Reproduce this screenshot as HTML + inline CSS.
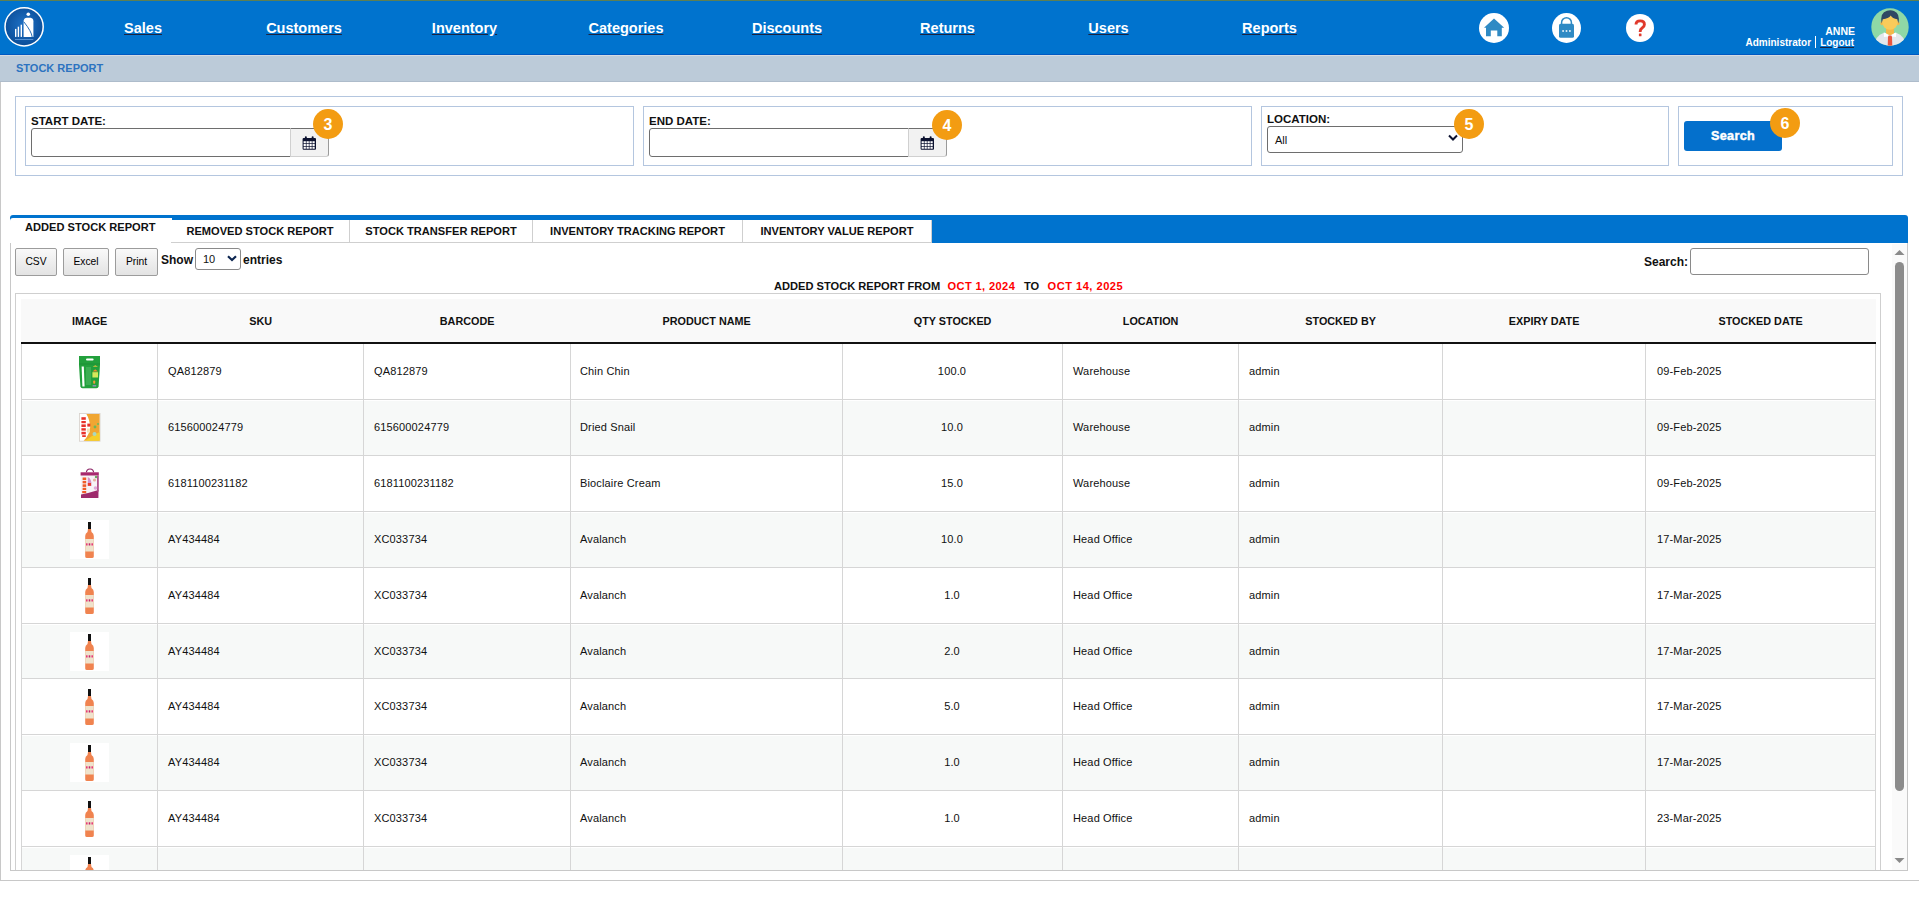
<!DOCTYPE html><html><head><meta charset="utf-8"><style>
*{box-sizing:border-box;margin:0;padding:0}
html,body{width:1919px;height:902px;overflow:hidden;background:#fff;font-family:"Liberation Sans",sans-serif;color:#111}
.a{position:absolute}
#topline{left:0;top:0;width:1919px;height:1px;background:#5d7f52}
#hdr{left:0;top:1px;width:1919px;height:54px;background:#0073ce}
.nav{position:absolute;top:20px;font-weight:bold;font-size:14.5px;line-height:16px;color:#fff;text-decoration:underline;text-decoration-color:#1c2340;text-underline-offset:1px;white-space:nowrap;transform:translateX(-50%)}
#band{left:0;top:55px;width:1919px;height:27px;background:#bccbd9}
#bandtxt{left:16px;top:62px;font-size:11px;line-height:12px;font-weight:bold;color:#2c73c0;white-space:nowrap}
#page{left:0;top:82px;width:1919px;height:799px;border-left:1px solid #c8c8c8;border-bottom:1px solid #c8c8c8}
.box{position:absolute;border:1px solid #b4c6df}
.lbl{position:absolute;font-size:11.5px;line-height:12px;font-weight:bold;color:#111;white-space:nowrap}
.inp{position:absolute;border:1px solid #6e6e6e;border-radius:3px 0 0 3px;background:#fff}
.addon{position:absolute;background:#f2f2f2;border:1px solid #d0d0d0;border-top:1px solid #6e6e6e;border-right:1px solid #9a9a9a;border-radius:0 3px 3px 0}
.badge{position:absolute;width:30px;height:30px;border-radius:50%;background:#f39c12;color:#fff;font-weight:bold;font-size:16px;text-align:center;line-height:31px}
.tab{position:absolute;top:220px;height:23px;background:#fff;border-right:1px solid #cfcfcf;border-bottom:1px solid #cfcfcf;font-size:11.1px;font-weight:bold;line-height:12px;color:#111;white-space:nowrap;padding-top:5px;text-align:center}
.btn{position:absolute;top:248px;height:28px;border:1px solid #9c9c9c;border-radius:2px;background:linear-gradient(#f9f9f9,#e3e3e3);font-size:10.3px;color:#000;text-align:center;line-height:26px}
.th{position:absolute;top:315px;font-size:10.8px;line-height:12px;font-weight:bold;color:#111;white-space:nowrap;transform:translateX(-50%)}
.td{position:absolute;font-size:11px;line-height:12px;color:#111;white-space:nowrap;letter-spacing:0.15px}
.vl{position:absolute;width:1px;background:#d6d6d6}
.hl{position:absolute;height:1px;background:#d6d6d6}
</style></head><body>
<div id="topline" class="a"></div><div id="hdr" class="a"></div>
<svg class="a" style="left:3px;top:6px" width="42" height="42" viewBox="0 0 42 42">
<defs><radialGradient id="lg" cx="50%" cy="45%" r="55%"><stop offset="0" stop-color="#1f72c6"/><stop offset="1" stop-color="#0a4d98"/></radialGradient></defs>
<circle cx="21.1" cy="20.8" r="19.1" fill="url(#lg)" stroke="#fff" stroke-width="1.5"/>
<rect x="12" y="22.9" width="1.4" height="8" fill="#fff"/><rect x="14.7" y="20.7" width="1.4" height="10.2" fill="#fff"/><rect x="17.6" y="18.7" width="1.4" height="12.2" fill="#fff"/>
<path d="M20.6 30.9 L20.6 14.8 Q21.2 11.9 23.8 11.8 L27.6 11.8 Q30.3 12.3 30.4 15.2 L30.4 30.9 Z" fill="#fff"/>
<path d="M20.8 15.8 Q25 21 26.8 24.5 Q28.8 28 29.2 31" fill="none" stroke="#0f5cad" stroke-width="0.9"/>
<circle cx="25.3" cy="8.3" r="1.8" fill="#fff"/>
<rect x="12" y="33" width="18.3" height="0.9" fill="#5d97d6"/>
</svg>
<div class="nav" style="left:143px">Sales</div>
<div class="nav" style="left:304px">Customers</div>
<div class="nav" style="left:464.5px">Inventory</div>
<div class="nav" style="left:626px">Categories</div>
<div class="nav" style="left:787px">Discounts</div>
<div class="nav" style="left:947.5px">Returns</div>
<div class="nav" style="left:1108.5px">Users</div>
<div class="nav" style="left:1269.5px">Reports</div>
<svg class="a" style="left:1479px;top:13px" width="30" height="30" viewBox="0 0 30 30">
<circle cx="15" cy="15" r="15" fill="#fff"/>
<path d="M5 14.7 L15 5.5 L25.2 14.7 L22.8 14.7 L22.8 23.3 L18.3 23.3 L18.3 17.5 L11.8 17.5 L11.8 23.3 L7 23.3 L7 14.7 Z" fill="#2f8ac4"/>
</svg>
<svg class="a" style="left:1552px;top:13px" width="30" height="30" viewBox="0 0 30 30">
<ellipse cx="14.5" cy="15" rx="14.5" ry="15" fill="#fff"/>
<path d="M9.6 11.5 V9.6 A4.9 4.9 0 0 1 19.4 9.6 V11.5" fill="none" stroke="#2f8ac4" stroke-width="1.5"/>
<rect x="7" y="10.8" width="15" height="14" rx="1.6" fill="#2f8ac4"/>
<rect x="10.3" y="17.2" width="1.6" height="1.6" fill="#fff"/><rect x="13.7" y="17.2" width="1.6" height="1.6" fill="#fff"/><rect x="17.1" y="17.2" width="1.6" height="1.6" fill="#fff"/>
</svg>
<svg class="a" style="left:1626px;top:14px" width="28" height="28" viewBox="0 0 28 28">
<circle cx="14" cy="14" r="14" fill="#fff"/>
<path d="M10 10.6 Q10 6.9 14.2 6.9 Q18.4 6.9 18.4 10.4 Q18.4 12.5 16.1 13.9 Q14.2 15.1 14.2 17.3 V18" fill="none" stroke="#e0392b" stroke-width="2.9"/><rect x="12.9" y="19.6" width="2.6" height="2.6" rx="0.5" fill="#e0392b"/>
</svg>
<div class="a" style="left:1700px;top:25.5px;width:155px;text-align:right;font-size:10.5px;line-height:10px;font-weight:bold;color:#fff">ANNE</div>
<div class="a" style="left:1700px;top:36px;width:154px;text-align:right;font-size:10px;line-height:10px;font-weight:bold;color:#fff;white-space:nowrap">Administrator <span style="display:inline-block;width:1.5px;height:12px;background:#fff;vertical-align:-2px;margin:0 1px"></span> <span style="text-decoration:underline;text-decoration-color:#1c2340">Logout</span></div>
<svg class="a" style="left:1871px;top:8px" width="38" height="38" viewBox="0 0 38 38">
<defs><clipPath id="ac"><circle cx="19" cy="19" r="18.7"/></clipPath></defs>
<circle cx="19" cy="19" r="18.7" fill="#8fd8a6"/>
<g clip-path="url(#ac)">
<path d="M3 40 Q3.5 28 12.5 25 L25.5 25 Q34.5 28 35 40 Z" fill="#e4e7ec"/>
<path d="M15 18 L23 18 L23 25.5 Q19 28.5 15 25.5 Z" fill="#f2b94a"/>
<path d="M12.8 24.2 L19 27.8 L25.2 24.2 L25 29 L19 28.3 L13 29 Z" fill="#fff"/>
<path d="M17.6 27.5 L20.4 27.5 L21 29 L21.3 38 L16.7 38 L17 29 Z" fill="#e9573f"/>
<ellipse cx="10.8" cy="15.3" rx="1.4" ry="2" fill="#f2b94a"/><ellipse cx="27.2" cy="15.3" rx="1.4" ry="2" fill="#f2b94a"/>
<ellipse cx="19" cy="13.8" rx="7.8" ry="8" fill="#f9cb5a"/>
<path d="M10.6 15.5 Q8.8 4.5 16 2.8 Q19.5 1.5 23 3 Q29.5 5.5 27.4 15.5 L26.3 11.3 Q21.5 10.8 19.8 7.6 Q17.5 10.8 11.8 11.2 Z" fill="#2f4763"/>
</g></svg>
<div id="band" class="a"></div><div class="a" style="left:0;top:54px;width:1919px;height:1px;background:#0059c2"></div><div class="a" style="left:0;top:55px;width:1919px;height:1px;background:#d6dbe1"></div><div class="a" style="left:0;top:81px;width:1919px;height:1px;background:#aebccb"></div><div id="bandtxt" class="a">STOCK REPORT</div>
<div id="page" class="a"></div>
<div class="box" style="left:15px;top:96px;width:1888px;height:80px"></div>
<div class="box" style="left:25px;top:106px;width:609px;height:60px"></div>
<div class="box" style="left:643px;top:106px;width:609px;height:60px"></div>
<div class="box" style="left:1261px;top:106px;width:408px;height:60px"></div>
<div class="box" style="left:1678px;top:106px;width:215px;height:60px"></div>
<div class="lbl" style="left:31px;top:114.5px">START DATE:</div>
<div class="inp" style="left:31px;top:128px;width:260px;height:29px"></div>
<div class="addon" style="left:290px;top:128px;width:39px;height:29px"></div>
<svg class="a" style="left:302px;top:136px" width="15" height="14" viewBox="0 0 15 14">
<rect x="0.6" y="2" width="13.4" height="11.7" rx="1" fill="#0c1230"/>
<rect x="2.9" y="0.2" width="1.9" height="3.2" rx="0.9" fill="#0c1230"/><rect x="9.7" y="0.2" width="1.9" height="3.2" rx="0.9" fill="#0c1230"/>
<g fill="#fff"><rect x="1.60" y="5.20" width="2.25" height="2.05"/><rect x="4.55" y="5.20" width="2.25" height="2.05"/><rect x="7.50" y="5.20" width="2.25" height="2.05"/><rect x="10.45" y="5.20" width="2.25" height="2.05"/><rect x="1.60" y="7.95" width="2.25" height="2.05"/><rect x="4.55" y="7.95" width="2.25" height="2.05"/><rect x="7.50" y="7.95" width="2.25" height="2.05"/><rect x="10.45" y="7.95" width="2.25" height="2.05"/><rect x="1.60" y="10.70" width="2.25" height="2.05"/><rect x="4.55" y="10.70" width="2.25" height="2.05"/><rect x="7.50" y="10.70" width="2.25" height="2.05"/><rect x="10.45" y="10.70" width="2.25" height="2.05"/></g></svg>
<div class="badge" style="left:313px;top:109px">3</div>
<div class="lbl" style="left:649px;top:114.5px">END DATE:</div>
<div class="inp" style="left:649px;top:128px;width:260px;height:29px"></div>
<div class="addon" style="left:908px;top:128px;width:39px;height:29px"></div>
<svg class="a" style="left:920px;top:136px" width="15" height="14" viewBox="0 0 15 14">
<rect x="0.6" y="2" width="13.4" height="11.7" rx="1" fill="#0c1230"/>
<rect x="2.9" y="0.2" width="1.9" height="3.2" rx="0.9" fill="#0c1230"/><rect x="9.7" y="0.2" width="1.9" height="3.2" rx="0.9" fill="#0c1230"/>
<g fill="#fff"><rect x="1.60" y="5.20" width="2.25" height="2.05"/><rect x="4.55" y="5.20" width="2.25" height="2.05"/><rect x="7.50" y="5.20" width="2.25" height="2.05"/><rect x="10.45" y="5.20" width="2.25" height="2.05"/><rect x="1.60" y="7.95" width="2.25" height="2.05"/><rect x="4.55" y="7.95" width="2.25" height="2.05"/><rect x="7.50" y="7.95" width="2.25" height="2.05"/><rect x="10.45" y="7.95" width="2.25" height="2.05"/><rect x="1.60" y="10.70" width="2.25" height="2.05"/><rect x="4.55" y="10.70" width="2.25" height="2.05"/><rect x="7.50" y="10.70" width="2.25" height="2.05"/><rect x="10.45" y="10.70" width="2.25" height="2.05"/></g></svg>
<div class="badge" style="left:932px;top:110px">4</div>
<div class="lbl" style="left:1267px;top:112.5px">LOCATION:</div>
<div class="a" style="left:1267px;top:126px;width:196px;height:27px;border:1px solid #6e6e6e;border-radius:3px;background:#fff"></div>
<div class="a" style="left:1275px;top:134px;font-size:11px;line-height:12px;color:#111">All</div>
<svg class="a" style="left:1448px;top:134px" width="10" height="8" viewBox="0 0 10 8"><path d="M1 1.5 L5 5.5 L9 1.5" fill="none" stroke="#0c1230" stroke-width="2"/></svg>
<div class="badge" style="left:1454px;top:109px">5</div>
<div class="a" style="left:1684px;top:121px;width:98px;height:30px;background:#0470cc;border-radius:3px;color:#fff;font-weight:bold;font-size:12.6px;line-height:31px;text-align:center;letter-spacing:0.35px;-webkit-text-stroke:0.45px #fff">Search</div>
<div class="badge" style="left:1770px;top:108px">6</div>
<div class="a" style="left:10px;top:215px;width:1898px;height:28px;background:#0073ce;border-radius:3px 3px 0 0"></div>
<div class="a" style="left:10px;top:218px;width:162px;height:26px;background:#fff;border-radius:3px 0 0 0"></div>
<div class="a" style="left:25px;top:221px;font-size:11.1px;line-height:12px;font-weight:bold;color:#111;white-space:nowrap">ADDED STOCK REPORT</div>
<div class="tab" style="left:171px;width:179px;padding-top:4.5px">REMOVED STOCK REPORT</div>
<div class="tab" style="left:350px;width:183px;padding-top:4.5px">STOCK TRANSFER REPORT</div>
<div class="tab" style="left:533px;width:210px;padding-top:4.5px">INVENTORY TRACKING REPORT</div>
<div class="tab" style="left:743px;width:189px;padding-top:4.5px">INVENTORY VALUE REPORT</div>
<div class="a" style="left:10px;top:243px;width:1898px;height:628px;border-left:1px solid #c8c8c8;border-right:1px solid #c8c8c8;border-bottom:1px solid #c8c8c8"></div>
<div class="btn" style="left:15px;width:42px">CSV</div>
<div class="btn" style="left:63px;width:46px">Excel</div>
<div class="btn" style="left:115px;width:43px">Print</div>
<div class="a" style="left:161px;top:253.5px;font-size:12px;line-height:12px;font-weight:bold;color:#111">Show</div>
<div class="a" style="left:195px;top:248px;width:46px;height:22px;border:1px solid #8a8a8a;border-radius:3px;background:#fff"></div>
<div class="a" style="left:203px;top:253px;font-size:11px;line-height:12px;color:#111">10</div>
<svg class="a" style="left:227px;top:255px" width="10" height="7" viewBox="0 0 10 7"><path d="M1 1.3 L5 5 L9 1.3" fill="none" stroke="#0c2550" stroke-width="2.2"/></svg>
<div class="a" style="left:243px;top:253.5px;font-size:12px;line-height:12px;font-weight:bold;color:#111">entries</div>
<div class="a" style="left:1644px;top:256px;font-size:12px;line-height:12px;font-weight:bold;color:#111">Search:</div>
<div class="a" style="left:1690px;top:248px;width:179px;height:27px;border:1px solid #8a8a8a;border-radius:3px;background:#fff"></div>
<div class="a" style="left:774px;top:280px;font-size:11.1px;line-height:12px;font-weight:bold;white-space:nowrap;color:#111">ADDED STOCK REPORT FROM</div>
<div class="a" style="left:947.5px;top:280px;font-size:11.1px;line-height:12px;font-weight:bold;white-space:nowrap;color:#f00;letter-spacing:0.38px">OCT 1, 2024</div>
<div class="a" style="left:1024px;top:280px;font-size:11.1px;line-height:12px;font-weight:bold;white-space:nowrap;color:#111">TO</div>
<div class="a" style="left:1047.5px;top:280px;font-size:11.1px;line-height:12px;font-weight:bold;white-space:nowrap;color:#f00;letter-spacing:0.5px">OCT 14, 2025</div>
<div class="a" style="left:1892px;top:244px;width:15px;height:626px;background:#fafafa"></div>
<svg class="a" style="left:1894px;top:249px" width="11" height="7" viewBox="0 0 11 7"><path d="M0.5 6 L5.5 1 L10.5 6 Z" fill="#8a8a8a"/></svg>
<div class="a" style="left:1895px;top:262px;width:9px;height:529px;background:#8c8c8c;border-radius:5px"></div>
<svg class="a" style="left:1894px;top:857px" width="11" height="7" viewBox="0 0 11 7"><path d="M0.5 1 L5.5 6 L10.5 1 Z" fill="#8a8a8a"/></svg>
<div class="a" style="left:0;top:0;width:1919px;height:902px;clip-path:inset(244px 0 32px 0)">
<div class="a" style="left:15px;top:293px;width:1866px;height:578px;border-left:1px solid #cfcfcf;border-top:1px solid #cfcfcf;border-right:1px solid #cfcfcf"></div>
<div class="a" style="left:21px;top:299px;width:1855px;height:44px;background:#f9f9f9"></div>
<div class="a" style="left:21px;top:342px;width:1855px;height:2px;background:#111"></div>
<div class="th" style="left:89.60px">IMAGE</div>
<div class="th" style="left:260.60px">SKU</div>
<div class="th" style="left:467.10px">BARCODE</div>
<div class="th" style="left:706.60px">PRODUCT NAME</div>
<div class="th" style="left:952.60px">QTY STOCKED</div>
<div class="th" style="left:1150.60px">LOCATION</div>
<div class="th" style="left:1340.60px">STOCKED BY</div>
<div class="th" style="left:1544.10px">EXPIRY DATE</div>
<div class="th" style="left:1760.60px">STOCKED DATE</div>
<div class="hl" style="left:21px;top:398.90px;width:1855px"></div>
<div class="td" style="left:168px;top:365.00px">QA812879</div>
<div class="td" style="left:374px;top:365.00px">QA812879</div>
<div class="td" style="left:580px;top:365.00px">Chin Chin</div>
<div class="td" style="left:952px;top:365.00px;transform:translateX(-50%)">100.0</div>
<div class="td" style="left:1073px;top:365.00px">Warehouse</div>
<div class="td" style="left:1249px;top:365.00px">admin</div>
<div class="td" style="left:1657px;top:365.00px">09-Feb-2025</div>
<svg class="a" style="left:78px;top:354.50px" width="23" height="34" viewBox="0 0 23 34">
<path d="M1 1 L22 1 L22 10 L20.6 31.5 Q20.3 33.2 18.5 33.2 L4.5 33.2 Q2.7 33.2 2.4 31.5 L1 10 Z" fill="#22a03c"/>
<rect x="1" y="8.5" width="21" height="1" fill="#1c8f35"/>
<rect x="8" y="3.4" width="7.6" height="2" rx="1" fill="#fff"/>
<path d="M3.6 11.5 L5.8 11.5 L6.6 31.5 L4.4 31.5 Z" fill="#fff"/>
<rect x="8" y="12" width="5" height="18" fill="#4fb862" opacity="0.6"/>
<path d="M14.5 16.5 L17.2 14.2 L20 16.5 Z" fill="#f08a2a"/>
<path d="M14.6 11.8 L17.3 10.3 L20 11.8 Z" fill="#e0c040"/>
<rect x="14.4" y="17.2" width="5.6" height="5.3" fill="#d6e85a"/>
<rect x="15.2" y="25.5" width="2" height="3.2" rx="0.8" fill="#f29a3a"/>
<rect x="14.6" y="30" width="3.6" height="1.6" fill="#8a8fb0"/>
</svg>
<div class="a" style="left:21px;top:400.90px;width:1855px;height:54.90px;background:#f7f9f8"></div>
<div class="hl" style="left:21px;top:454.80px;width:1855px"></div>
<div class="td" style="left:168px;top:420.90px">615600024779</div>
<div class="td" style="left:374px;top:420.90px">615600024779</div>
<div class="td" style="left:580px;top:420.90px">Dried Snail</div>
<div class="td" style="left:952px;top:420.90px;transform:translateX(-50%)">10.0</div>
<div class="td" style="left:1073px;top:420.90px">Warehouse</div>
<div class="td" style="left:1249px;top:420.90px">admin</div>
<div class="td" style="left:1657px;top:420.90px">09-Feb-2025</div>
<svg class="a" style="left:79px;top:413.30px" width="22" height="29" viewBox="0 0 22 29">
<rect x="0.4" y="0.4" width="20.6" height="27.8" fill="#fff" stroke="#d8d2cc" stroke-width="0.9"/>
<path d="M7.4 1 L20.6 1 L20.6 27.8 L4.6 27.8 Q10.6 22 11.2 14 Q10.5 6 7.4 1 Z" fill="#f0a632"/>
<path d="M6 27.8 Q14 22 20.6 19 L20.6 27.8 Z" fill="#f5cf2a"/>
<g fill="#e8322a"><rect x="2.4" y="4.2" width="4.4" height="2.6"/><rect x="2.4" y="8" width="4.4" height="2.2"/><rect x="2.4" y="11.4" width="4.4" height="2.6"/><rect x="2.4" y="15.2" width="4.4" height="2.4"/><rect x="2.4" y="18.8" width="4.4" height="2.6"/><rect x="3.2" y="22.2" width="3.6" height="1.8"/></g>
<rect x="8.3" y="10.6" width="3" height="3" fill="#e8322a"/>
<rect x="8" y="15.5" width="3" height="4" fill="#f3e3b8"/>
<circle cx="16" cy="14" r="1.4" fill="#6cb85a"/><circle cx="15.5" cy="21" r="2" fill="#a8d8c0"/><circle cx="19" cy="11" r="1" fill="#6cb85a"/>
</svg>
<div class="hl" style="left:21px;top:510.70px;width:1855px"></div>
<div class="td" style="left:168px;top:476.80px">6181100231182</div>
<div class="td" style="left:374px;top:476.80px">6181100231182</div>
<div class="td" style="left:580px;top:476.80px">Bioclaire Cream</div>
<div class="td" style="left:952px;top:476.80px;transform:translateX(-50%)">15.0</div>
<div class="td" style="left:1073px;top:476.80px">Warehouse</div>
<div class="td" style="left:1249px;top:476.80px">admin</div>
<div class="td" style="left:1657px;top:476.80px">09-Feb-2025</div>
<svg class="a" style="left:80px;top:468.30px" width="20" height="31" viewBox="0 0 20 31">
<path d="M6.3 5.5 Q6.3 1 10 1 Q13.7 1 13.7 5.5" fill="none" stroke="#8c2466" stroke-width="1.1"/>
<path d="M0.6 4.3 L18.8 4.3 L18.4 29 Q18 30 16.5 30 L3 30 Q1.2 30 1 29 Z" fill="#f6f2f6"/>
<rect x="0.6" y="4.3" width="18.2" height="3.2" fill="#a8286e"/>
<path d="M1 26.5 Q9 25 18.5 22 L18.4 30 L1 30 Z" fill="#9e2a6c"/>
<rect x="17" y="7.5" width="1.8" height="16" fill="#b0508a"/>
<g fill="#f05a28"><rect x="2.6" y="9.5" width="3.6" height="2.6"/><rect x="2.6" y="13" width="3.6" height="2.4"/><rect x="2.6" y="16.3" width="3.6" height="2.6"/><rect x="2.6" y="19.8" width="3.6" height="2.2"/><rect x="2.2" y="23" width="4" height="2.2"/></g>
<path d="M7.8 9 Q12 11 11.5 18 L7.8 18 Z" fill="#d890c8"/>
<rect x="7.8" y="15" width="3.2" height="2.8" fill="#e83a2a"/>
<circle cx="14.5" cy="12" r="1.6" fill="#e8b0a0"/><circle cx="15.5" cy="20" r="1.8" fill="#e0a8d8"/><circle cx="16" cy="9" r="1.2" fill="#6aa860"/>
</svg>
<div class="a" style="left:21px;top:512.70px;width:1855px;height:54.90px;background:#f7f9f8"></div>
<div class="hl" style="left:21px;top:566.60px;width:1855px"></div>
<div class="td" style="left:168px;top:532.70px">AY434484</div>
<div class="td" style="left:374px;top:532.70px">XC033734</div>
<div class="td" style="left:580px;top:532.70px">Avalanch</div>
<div class="td" style="left:952px;top:532.70px;transform:translateX(-50%)">10.0</div>
<div class="td" style="left:1073px;top:532.70px">Head Office</div>
<div class="td" style="left:1249px;top:532.70px">admin</div>
<div class="td" style="left:1657px;top:532.70px">17-Mar-2025</div>
<svg class="a" style="left:70px;top:519.70px" width="39" height="39" viewBox="0 0 39 39">
<rect x="0" y="0" width="39" height="39" fill="#fff"/>
<rect x="18" y="2" width="3" height="7" fill="#111"/>
<path d="M18 9 L21 9 L21.5 12 Q23.8 13.5 23.8 16 L23.8 36.5 Q23.8 38 22 38 L17 38 Q15.2 38 15.2 36.5 L15.2 16 Q15.2 13.5 17.5 12 Z" fill="#f0834f"/>
<rect x="15.2" y="19" width="8.6" height="12.5" fill="#efe3cc"/>
<rect x="16" y="23.3" width="1.6" height="2.2" fill="#e83a7a"/><rect x="18.7" y="23.3" width="1.6" height="2.2" fill="#c0286a"/><rect x="21.4" y="23.3" width="1.6" height="2.2" fill="#e83a7a"/>
</svg>
<div class="hl" style="left:21px;top:622.50px;width:1855px"></div>
<div class="td" style="left:168px;top:588.60px">AY434484</div>
<div class="td" style="left:374px;top:588.60px">XC033734</div>
<div class="td" style="left:580px;top:588.60px">Avalanch</div>
<div class="td" style="left:952px;top:588.60px;transform:translateX(-50%)">1.0</div>
<div class="td" style="left:1073px;top:588.60px">Head Office</div>
<div class="td" style="left:1249px;top:588.60px">admin</div>
<div class="td" style="left:1657px;top:588.60px">17-Mar-2025</div>
<svg class="a" style="left:70px;top:575.60px" width="39" height="39" viewBox="0 0 39 39">
<rect x="0" y="0" width="39" height="39" fill="#fff"/>
<rect x="18" y="2" width="3" height="7" fill="#111"/>
<path d="M18 9 L21 9 L21.5 12 Q23.8 13.5 23.8 16 L23.8 36.5 Q23.8 38 22 38 L17 38 Q15.2 38 15.2 36.5 L15.2 16 Q15.2 13.5 17.5 12 Z" fill="#f0834f"/>
<rect x="15.2" y="19" width="8.6" height="12.5" fill="#efe3cc"/>
<rect x="16" y="23.3" width="1.6" height="2.2" fill="#e83a7a"/><rect x="18.7" y="23.3" width="1.6" height="2.2" fill="#c0286a"/><rect x="21.4" y="23.3" width="1.6" height="2.2" fill="#e83a7a"/>
</svg>
<div class="a" style="left:21px;top:624.50px;width:1855px;height:54.90px;background:#f7f9f8"></div>
<div class="hl" style="left:21px;top:678.40px;width:1855px"></div>
<div class="td" style="left:168px;top:644.50px">AY434484</div>
<div class="td" style="left:374px;top:644.50px">XC033734</div>
<div class="td" style="left:580px;top:644.50px">Avalanch</div>
<div class="td" style="left:952px;top:644.50px;transform:translateX(-50%)">2.0</div>
<div class="td" style="left:1073px;top:644.50px">Head Office</div>
<div class="td" style="left:1249px;top:644.50px">admin</div>
<div class="td" style="left:1657px;top:644.50px">17-Mar-2025</div>
<svg class="a" style="left:70px;top:631.50px" width="39" height="39" viewBox="0 0 39 39">
<rect x="0" y="0" width="39" height="39" fill="#fff"/>
<rect x="18" y="2" width="3" height="7" fill="#111"/>
<path d="M18 9 L21 9 L21.5 12 Q23.8 13.5 23.8 16 L23.8 36.5 Q23.8 38 22 38 L17 38 Q15.2 38 15.2 36.5 L15.2 16 Q15.2 13.5 17.5 12 Z" fill="#f0834f"/>
<rect x="15.2" y="19" width="8.6" height="12.5" fill="#efe3cc"/>
<rect x="16" y="23.3" width="1.6" height="2.2" fill="#e83a7a"/><rect x="18.7" y="23.3" width="1.6" height="2.2" fill="#c0286a"/><rect x="21.4" y="23.3" width="1.6" height="2.2" fill="#e83a7a"/>
</svg>
<div class="hl" style="left:21px;top:734.30px;width:1855px"></div>
<div class="td" style="left:168px;top:700.40px">AY434484</div>
<div class="td" style="left:374px;top:700.40px">XC033734</div>
<div class="td" style="left:580px;top:700.40px">Avalanch</div>
<div class="td" style="left:952px;top:700.40px;transform:translateX(-50%)">5.0</div>
<div class="td" style="left:1073px;top:700.40px">Head Office</div>
<div class="td" style="left:1249px;top:700.40px">admin</div>
<div class="td" style="left:1657px;top:700.40px">17-Mar-2025</div>
<svg class="a" style="left:70px;top:687.40px" width="39" height="39" viewBox="0 0 39 39">
<rect x="0" y="0" width="39" height="39" fill="#fff"/>
<rect x="18" y="2" width="3" height="7" fill="#111"/>
<path d="M18 9 L21 9 L21.5 12 Q23.8 13.5 23.8 16 L23.8 36.5 Q23.8 38 22 38 L17 38 Q15.2 38 15.2 36.5 L15.2 16 Q15.2 13.5 17.5 12 Z" fill="#f0834f"/>
<rect x="15.2" y="19" width="8.6" height="12.5" fill="#efe3cc"/>
<rect x="16" y="23.3" width="1.6" height="2.2" fill="#e83a7a"/><rect x="18.7" y="23.3" width="1.6" height="2.2" fill="#c0286a"/><rect x="21.4" y="23.3" width="1.6" height="2.2" fill="#e83a7a"/>
</svg>
<div class="a" style="left:21px;top:736.30px;width:1855px;height:54.90px;background:#f7f9f8"></div>
<div class="hl" style="left:21px;top:790.20px;width:1855px"></div>
<div class="td" style="left:168px;top:756.30px">AY434484</div>
<div class="td" style="left:374px;top:756.30px">XC033734</div>
<div class="td" style="left:580px;top:756.30px">Avalanch</div>
<div class="td" style="left:952px;top:756.30px;transform:translateX(-50%)">1.0</div>
<div class="td" style="left:1073px;top:756.30px">Head Office</div>
<div class="td" style="left:1249px;top:756.30px">admin</div>
<div class="td" style="left:1657px;top:756.30px">17-Mar-2025</div>
<svg class="a" style="left:70px;top:743.30px" width="39" height="39" viewBox="0 0 39 39">
<rect x="0" y="0" width="39" height="39" fill="#fff"/>
<rect x="18" y="2" width="3" height="7" fill="#111"/>
<path d="M18 9 L21 9 L21.5 12 Q23.8 13.5 23.8 16 L23.8 36.5 Q23.8 38 22 38 L17 38 Q15.2 38 15.2 36.5 L15.2 16 Q15.2 13.5 17.5 12 Z" fill="#f0834f"/>
<rect x="15.2" y="19" width="8.6" height="12.5" fill="#efe3cc"/>
<rect x="16" y="23.3" width="1.6" height="2.2" fill="#e83a7a"/><rect x="18.7" y="23.3" width="1.6" height="2.2" fill="#c0286a"/><rect x="21.4" y="23.3" width="1.6" height="2.2" fill="#e83a7a"/>
</svg>
<div class="hl" style="left:21px;top:846.10px;width:1855px"></div>
<div class="td" style="left:168px;top:812.20px">AY434484</div>
<div class="td" style="left:374px;top:812.20px">XC033734</div>
<div class="td" style="left:580px;top:812.20px">Avalanch</div>
<div class="td" style="left:952px;top:812.20px;transform:translateX(-50%)">1.0</div>
<div class="td" style="left:1073px;top:812.20px">Head Office</div>
<div class="td" style="left:1249px;top:812.20px">admin</div>
<div class="td" style="left:1657px;top:812.20px">23-Mar-2025</div>
<svg class="a" style="left:70px;top:799.20px" width="39" height="39" viewBox="0 0 39 39">
<rect x="0" y="0" width="39" height="39" fill="#fff"/>
<rect x="18" y="2" width="3" height="7" fill="#111"/>
<path d="M18 9 L21 9 L21.5 12 Q23.8 13.5 23.8 16 L23.8 36.5 Q23.8 38 22 38 L17 38 Q15.2 38 15.2 36.5 L15.2 16 Q15.2 13.5 17.5 12 Z" fill="#f0834f"/>
<rect x="15.2" y="19" width="8.6" height="12.5" fill="#efe3cc"/>
<rect x="16" y="23.3" width="1.6" height="2.2" fill="#e83a7a"/><rect x="18.7" y="23.3" width="1.6" height="2.2" fill="#c0286a"/><rect x="21.4" y="23.3" width="1.6" height="2.2" fill="#e83a7a"/>
</svg>
<div class="a" style="left:21px;top:848.10px;width:1855px;height:54.90px;background:#f7f9f8"></div>
<div class="hl" style="left:21px;top:902.00px;width:1855px"></div>
<svg class="a" style="left:70px;top:855.10px" width="39" height="39" viewBox="0 0 39 39">
<rect x="0" y="0" width="39" height="39" fill="#fff"/>
<rect x="18" y="2" width="3" height="7" fill="#111"/>
<path d="M18 9 L21 9 L21.5 12 Q23.8 13.5 23.8 16 L23.8 36.5 Q23.8 38 22 38 L17 38 Q15.2 38 15.2 36.5 L15.2 16 Q15.2 13.5 17.5 12 Z" fill="#f0834f"/>
<rect x="15.2" y="19" width="8.6" height="12.5" fill="#efe3cc"/>
<rect x="16" y="23.3" width="1.6" height="2.2" fill="#e83a7a"/><rect x="18.7" y="23.3" width="1.6" height="2.2" fill="#c0286a"/><rect x="21.4" y="23.3" width="1.6" height="2.2" fill="#e83a7a"/>
</svg>
<div class="vl" style="left:21.00px;top:344px;height:527px"></div>
<div class="vl" style="left:157.00px;top:344px;height:527px"></div>
<div class="vl" style="left:363.00px;top:344px;height:527px"></div>
<div class="vl" style="left:570.00px;top:344px;height:527px"></div>
<div class="vl" style="left:842.00px;top:344px;height:527px"></div>
<div class="vl" style="left:1062.00px;top:344px;height:527px"></div>
<div class="vl" style="left:1238.00px;top:344px;height:527px"></div>
<div class="vl" style="left:1442.00px;top:344px;height:527px"></div>
<div class="vl" style="left:1645.00px;top:344px;height:527px"></div>
<div class="vl" style="left:1875.00px;top:344px;height:527px"></div>
</div>
</body></html>
